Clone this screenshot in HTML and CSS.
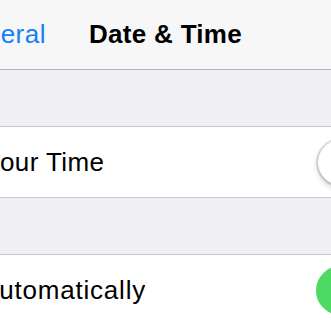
FILE: index.html
```html
<!DOCTYPE html>
<html>
<head>
<meta charset="utf-8">
<link rel="stylesheet" href="styles.css">
</head>
<body>
<div class="screen">
  <header class="nav">
    <div class="back"><span class="back-text">General</span></div>
    <div class="title">Date &amp; Time</div>
    <div></div>
  </header>
  <div class="gap"></div>
  <div class="row">
    <span class="label label-24">24-Hour Time</span>
    <span class="switch off"><span class="knob"></span></span>
  </div>
  <div class="gap"></div>
  <div class="row">
    <span class="label label-auto">Set Automatically</span>
    <span class="switch on"><span class="knob"></span></span>
  </div>
</div>
</body>
</html>
```
FILE: styles.css
```css
html, body {
  margin: 0;
  padding: 0;
  background: #ffffff;
}
.screen {
  width: 331px;
  height: 320px;
  overflow: hidden;
  font-family: "Liberation Sans", Arial, sans-serif;
  background: #efeff4;
}
.nav {
  height: 69px;
  background: #f7f7f7;
  border-bottom: 1px solid #b2b2b2;
  display: grid;
  grid-template-columns: 1fr auto 1fr;
  align-items: center;
}
.back {
  overflow: hidden;
  white-space: nowrap;
}
.back-text {
  display: inline-block;
  color: #157efb;
  font-size: 26px;
  letter-spacing: 0.5px;
  margin-left: -50px;
}
.title {
  font-size: 26px;
  font-weight: bold;
  letter-spacing: 0.3px;
  color: #000;
}
.gap {
  height: 56px;
  background: #efeff4;
}
.row {
  height: 70px;
  background: #ffffff;
  border-top: 1px solid #c8c7cc;
  border-bottom: 1px solid #c8c7cc;
  display: flex;
  align-items: center;
  overflow: hidden;
  white-space: nowrap;
}
.label {
  font-size: 26px;
  letter-spacing: 0.4px;
  color: #000;
  flex: none;
}
.label-24 {
  margin-left: -58px;
}
.label-auto {
  letter-spacing: 0.8px;
  margin-left: -67px;
}
.switch {
  flex: none;
  margin-left: auto;
  margin-right: -66px;
  width: 81px;
  height: 49px;
  border-radius: 25px;
  box-sizing: border-box;
  position: relative;
}
.switch.off {
  background: #ffffff;
  border: 2px solid #e5e5ea;
}
.switch.on {
  background: #4cd964;
  border: 2px solid #4cd964;
}
.knob {
  position: absolute;
  top: 0;
  width: 45px;
  height: 45px;
  border-radius: 50%;
  background: #ffffff;
  box-shadow: 0 3px 6px rgba(0,0,0,0.22), 0 0 1px rgba(0,0,0,0.25);
}
.switch.off .knob {
  left: 0;
}
.switch.on .knob {
  right: 0;
}
```
